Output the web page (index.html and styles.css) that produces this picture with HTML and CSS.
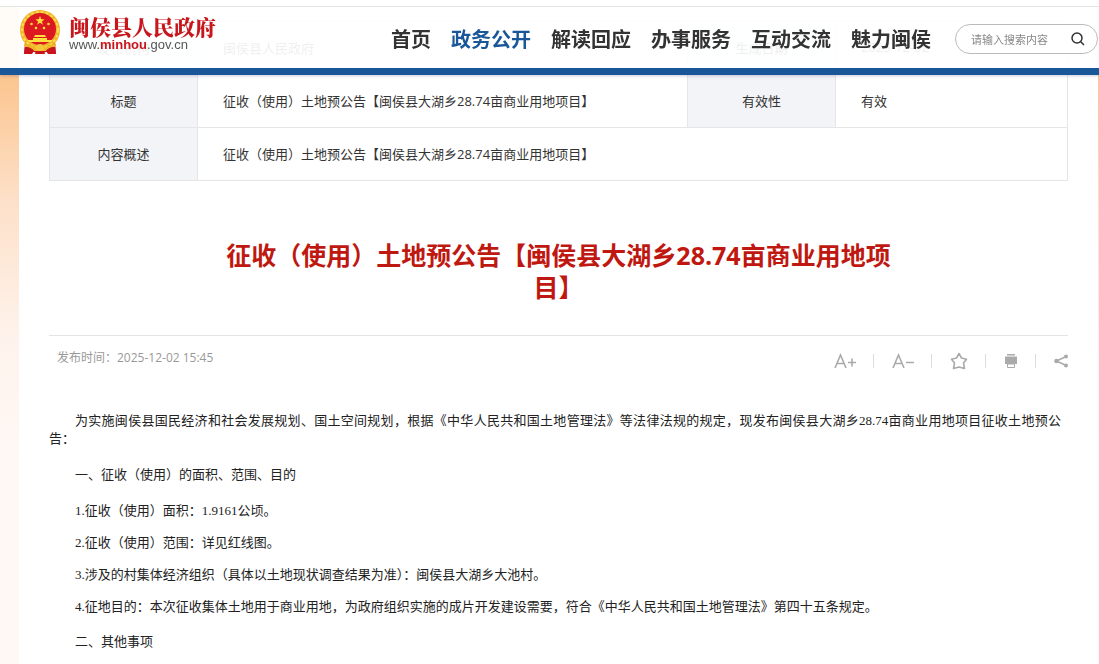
FILE: index.html
```html
<!DOCTYPE html>
<html lang="zh-CN">
<head>
    <meta charset="UTF-8">
    <meta name="viewport" content="width=device-width, initial-scale=1.0">
    <title>征收（使用）土地预公告【闽侯县大湖乡28.74亩商业用地项目】</title>
    <link rel="stylesheet" href="styles.css">
</head>
<body>
    <header class="header">
        <a class="logo" href="#">
            <svg class="emblem" viewBox="0 0 40 46" aria-hidden="true">
                <path d="M5 32 L4 44 L11 41 L20 44 L29 41 L36 44 L35 32 Z" fill="#c8141c"/>
                <ellipse cx="20" cy="20" rx="20" ry="20" fill="#f0b429"/>
                <ellipse cx="20" cy="20" rx="18" ry="18" fill="none" stroke="#f9dc55" stroke-width="2" stroke-dasharray="3 2"/>
                <ellipse cx="20" cy="19" rx="16" ry="16" fill="#dc1820"/>
                <path d="M20 6 l1.2 3.2 3.4 .1 -2.7 2.1 1 3.3 -2.9 -1.9 -2.9 1.9 1 -3.3 -2.7 -2.1 3.4 -.1z" fill="#ffdf3c"/>
                <g fill="#ffdf3c">
                    <circle cx="11.5" cy="14" r="1.3"/>
                    <circle cx="28.5" cy="14" r="1.3"/>
                    <circle cx="16" cy="18" r="1.3"/>
                    <circle cx="24" cy="18" r="1.3"/>
                    <path d="M15 25 h10 l1 2 h-12z M13 28 h14 v2 h-14z M7 30 h26 l-2 2 h-22z"/>
                </g>
                <path d="M4 34 Q12 34 15 38 Q20 34 25 38 Q28 34 36 34 L35 37 Q29 37 26 41 H14 Q11 37 5 37Z" fill="#f0b429"/>
                <circle cx="20" cy="38" r="4" fill="#f5c63a"/>
                <path d="M5 37 Q11 37 14 41 L12 44 L4 44Z M35 37 Q29 37 26 41 L28 44 L36 44Z M16 41 h8 l1 3 h-10z" fill="#c8141c"/>
            </svg>
            <span class="logo-text">
                <span class="logo-name">闽侯县人民政府</span>
                <span class="logo-url">www.<b>minhou</b>.gov.cn</span>
            </span>
        </a>
        <nav class="nav">
            <a href="#">首页</a>
            <a href="#" class="active">政务公开</a>
            <a href="#">解读回应</a>
            <a href="#">办事服务</a>
            <a href="#">互动交流</a>
            <a href="#">魅力闽侯</a>
        </nav>
        <form class="search">
            <input type="text" aria-label="搜索" placeholder="请输入搜索内容">
            <button type="submit" aria-label="搜索">
                <svg viewBox="0 0 14 14" width="14" height="14"><circle cx="6" cy="6" r="5" /><path d="M9.7 9.7 L13 13"/></svg>
            </button>
        </form>
    </header>

    <main class="page">
        <table class="info">
            <tbody>
                <tr>
                    <th>发布机构</th>
                    <td>闽侯县人民政府</td>
                    <th>生成日期</th>
                    <td>2025-12-02</td>
                </tr>
                <tr>
                    <th>标题</th>
                    <td>征收（使用）土地预公告【闽侯县大湖乡28.74亩商业用地项目】</td>
                    <th>有效性</th>
                    <td>有效</td>
                </tr>
                <tr>
                    <th>内容概述</th>
                    <td colspan="3">征收（使用）土地预公告【闽侯县大湖乡28.74亩商业用地项目】</td>
                </tr>
            </tbody>
        </table>

        <h1 class="title">征收（使用）土地预公告【闽侯县大湖乡28.74亩商业用地项目】</h1>

        <div class="meta">
            <span class="time">发布时间：2025-12-02 15:45</span>
            <div class="tools">
                <button type="button" aria-label="放大字体">
                    <svg viewBox="0 0 22 16" width="22" height="16"><path d="M1 15 L6.5 2 L12 15 M3 10.5 H10 M14 9.5 h8 M18 5.5 v8"/></svg>
                </button>
                <button type="button" aria-label="缩小字体">
                    <svg viewBox="0 0 22 16" width="22" height="16"><path d="M1 15 L6.5 2 L12 15 M3 10.5 H10 M14 9.5 h8"/></svg>
                </button>
                <button type="button" aria-label="收藏">
                    <svg viewBox="0 0 18 18" width="18" height="18"><path stroke-linejoin="round" d="M9 1.5 L11.5 6 L16.5 7.2 L13.5 11 L14.5 16.5 L9 15 L3.500 16.5 L4.5 11 L1.5 7.2 L6.5 6 Z"/></svg>
                </button>
                <button type="button" aria-label="打印">
                    <svg viewBox="0 0 14 14" width="14" height="14" class="solid"><path d="M3 0 h8 v1.500 h-8z M1 2.500 h12 v7.500 h-12z"/><path d="M3.500 10 h7 v3.500 h-7z" fill="#fff" stroke="#aaa" stroke-width="1"/></svg>
                </button>
                <button type="button" aria-label="分享">
                    <svg viewBox="0 0 14 14" width="14" height="14" class="solid"><path d="M12 2.5 L2.5 7 L12 11.5" fill="none" stroke="#aaa" stroke-width="1.5"/><circle cx="12" cy="2.5" r="2"/><circle cx="2.5" cy="7" r="2.3"/><circle cx="12" cy="11.5" r="2"/></svg>
                </button>
            </div>
        </div>

        <article class="content">
            <p>为实施闽侯县国民经济和社会发展规划、国土空间规划，根据《中华人民共和国土地管理法》等法律法规的规定，现发布闽侯县大湖乡28.74亩商业用地项目征收土地预公告：</p>
            <h2>一、征收（使用）的面积、范围、目的</h2>
            <ul>
                <li>1.征收（使用）面积：1.9161公顷。</li>
                <li>2.征收（使用）范围：详见红线图。</li>
                <li>3.涉及的村集体经济组织（具体以土地现状调查结果为准）：闽侯县大湖乡大池村。</li>
                <li>4.征地目的：本次征收集体土地用于商业用地，为政府组织实施的成片开发建设需要，符合《中华人民共和国土地管理法》第四十五条规定。</li>
            </ul>
            <h2>二、其他事项</h2>
        </article>
    </main>
</body>
</html>
```

FILE: styles.css
```css
* {
    box-sizing: border-box;
}
body {
    margin: 0;
    font-family: "Open Sans", "Noto Sans CJK SC", sans-serif;
    font-size: 13px;
    color: #333;
    background: linear-gradient(#fbc48c 70px, #fde0c8 200px, #fef3ec 340px, #fff8f5 460px) no-repeat #fff8f5;
}
a {
    color: inherit;
    text-decoration: none;
}
button {
    padding: 0;
    border: 0;
    background: none;
    cursor: pointer;
}
svg {
    display: block;
}

/* header */
.header {
    position: fixed;
    top: 0;
    left: 0;
    right: 0;
    z-index: 10;
    display: flex;
    align-items: center;
    height: 75px;
    padding: 0 1px 0 20px;
    border-bottom: 7px solid #1a5799;
    background: linear-gradient(#fff 6px, #e4e4e4 6px, #e4e4e4 7px, rgba(255, 255, 255, 0.92) 7px);
    background-clip: padding-box;
    box-shadow: 0 1px 3px rgba(0, 0, 80, 0.2);
}
.logo {
    display: flex;
    align-items: center;
    gap: 9px;
    flex: 1;
    padding-bottom: 2px;
}
.emblem {
    width: 40px;
    height: 46px;
}
.logo-text {
    display: flex;
    flex-direction: column;
}
.logo-name {
    font: 900 21px/24px "Noto Serif CJK SC", "Noto Sans CJK SC", serif;
    color: #c8161d;
}
.logo-url {
    font: 13px/14px "Liberation Sans", sans-serif;
    color: #555;
}
.logo-url b {
    color: #c8161d;
}
.nav {
    display: flex;
    gap: 20px;
    margin-right: 24px;
    padding-top: 8px;
    font-size: 20px;
    font-weight: bold;
    white-space: nowrap;
}
.nav .active {
    color: #1a5799;
}
.search {
    display: flex;
    align-items: center;
    width: 143px;
    height: 30px;
    margin-top: 10px;
    padding: 0 12px 0 15px;
    border: 1px solid #bbb;
    border-radius: 15px;
    background: #fff;
}
.search input {
    flex: 1;
    min-width: 0;
    padding: 0;
    border: 0;
    outline: 0;
    background: none;
    font: 11px "Open Sans", "Noto Sans CJK SC", sans-serif;
}
.search input::placeholder {
    color: #888;
}
.search svg {
    fill: none;
    stroke: #333;
    stroke-width: 1.5;
}

/* page */
.page {
    min-height: 100vh;
    margin: 0 1px 0 19px;
    padding: 21px 30px 0;
    background: #fff;
}
.info {
    width: 100%;
    border-collapse: collapse;
    table-layout: fixed;
}
.info th,
.info td {
    height: 53px;
    padding: 0 25px 2px;
    border: 1px solid #e6e6e6;
    text-align: left;
    font-weight: normal;
}
.info th {
    width: 148px;
    padding: 0 0 2px;
    background: #f3f4f8;
    text-align: center;
}
.info td:nth-child(2) {
    width: 490px;
}
.title {
    margin: 58px 0 32px;
    padding: 0 175px;
    font-size: 25px;
    line-height: 32px;
    text-align: center;
    color: #bf1810;
}
.meta {
    display: flex;
    justify-content: space-between;
    padding: 10px 0 0 8px;
    border-top: 1px solid #e4e4e4;
}
.time {
    font-size: 12px;
    line-height: 24px;
    color: #999;
}
.tools {
    display: flex;
    align-items: center;
    height: 30px;
}
.tools button {
    display: flex;
    align-items: center;
    height: 14px;
}
.tools button + button {
    margin-left: 17px;
    padding-left: 18px;
    border-left: 1px solid #ddd;
}
.tools svg {
    fill: none;
    stroke: #aaa;
    stroke-width: 1.6;
}
.tools .solid {
    fill: #aaa;
    stroke: none;
}
.content {
    padding: 36px 7px 0 0;
    font-family: "Liberation Serif", "Noto Sans CJK SC", serif;
    color: #222;
}
.content p,
.content h2,
.content ul {
    margin: 0;
    padding: 0;
    font-size: 13px;
    font-weight: normal;
    text-indent: 26px;
}
.content p {
    line-height: 18px;
    text-align: justify;
}
.content h2 {
    line-height: 20px;
    margin: 17px 0 10px;
}
.content ul + h2 {
    margin-top: 9px;
}
.content li {
    line-height: 32px;
    list-style: none;
}
```
